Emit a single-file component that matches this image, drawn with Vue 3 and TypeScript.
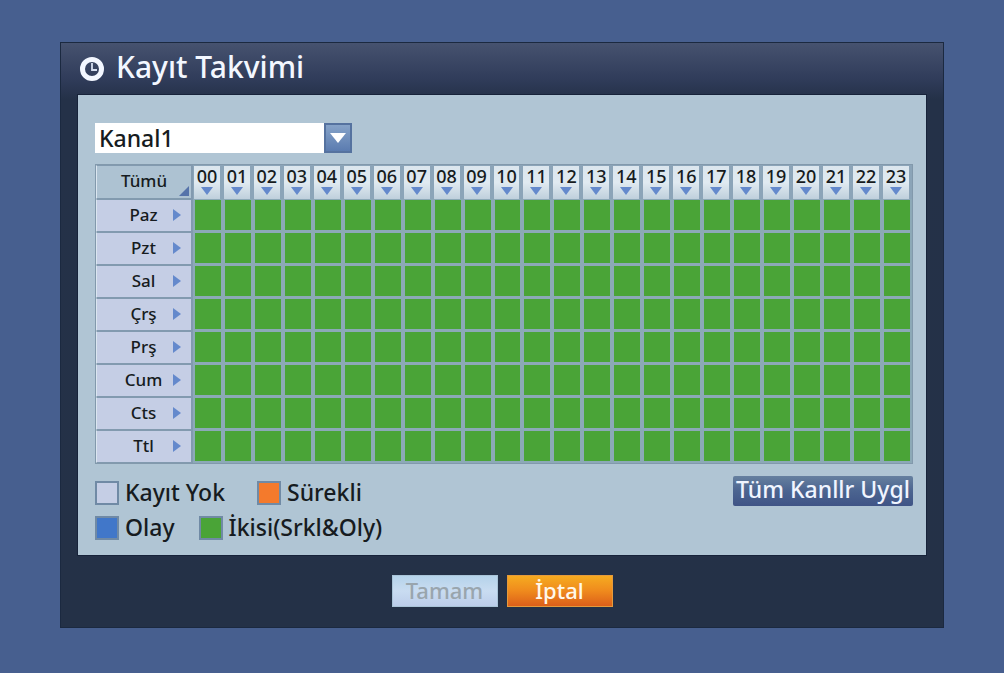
<script setup lang="ts">
import { ref } from 'vue'

type Mode = 'none' | 'continuous' | 'event' | 'both'

const days: string[] = ['Paz', 'Pzt', 'Sal', 'Çrş', 'Prş', 'Cum', 'Cts', 'Ttl']
const hours: string[] = Array.from({ length: 24 }, (_, h) => String(h).padStart(2, '0'))
const order: Mode[] = ['none', 'continuous', 'event', 'both']
const legend: { name: string; items: { mode: Mode; label: string }[] }[] = [
  {
    name: 'wide',
    items: [
      { mode: 'none', label: 'Kayıt Yok' },
      { mode: 'continuous', label: 'Sürekli' },
    ],
  },
  {
    name: 'narrow',
    items: [
      { mode: 'event', label: 'Olay' },
      { mode: 'both', label: 'İkisi(Srkl&Oly)' },
    ],
  },
]

const channel = ref('Kanal1')
const grid = ref<Mode[][]>(days.map(() => hours.map((): Mode => 'both')))

function next(mode: Mode): Mode {
  return order[(order.indexOf(mode) + 1) % order.length]
}
function cycleCell(d: number, h: number) {
  grid.value[d][h] = next(grid.value[d][h])
}
function cycleDay(d: number) {
  const mode = next(grid.value[d][0])
  grid.value[d] = hours.map(() => mode)
}
function cycleHour(h: number) {
  const mode = next(grid.value[0][h])
  grid.value.forEach((row) => (row[h] = mode))
}
function cycleAll() {
  const mode = next(grid.value[0][0])
  grid.value = days.map(() => hours.map(() => mode))
}
</script>

<template>
  <main class="screen">
    <section class="dialog" aria-labelledby="title">
      <header class="head">
        <svg class="clock" viewBox="0 0 26 26" aria-hidden="true">
          <circle cx="13" cy="13" r="9.5" fill="none" stroke="#f3f7ff" stroke-width="5" />
          <path d="M13 7V14H18" fill="none" stroke="#d5def0" stroke-width="1.8" />
        </svg>
        <h1 id="title">Kayıt Takvimi</h1>
      </header>

      <div class="panel">
        <div class="channel">
          <select v-model="channel" aria-label="Kanal">
            <option v-for="n in 4" :key="n" :value="`Kanal${n}`">Kanal{{ n }}</option>
          </select>
          <span class="drop" aria-hidden="true">
            <svg viewBox="0 0 16 10"><path d="M0 0H16L8 10Z" fill="#fff" /></svg>
          </span>
        </div>

        <table class="schedule">
          <colgroup>
            <col class="day-col" />
            <col v-for="h in hours" :key="h" />
          </colgroup>
          <thead>
            <tr>
              <th class="all">
                <button type="button" @click="cycleAll">
                  Tümü
                  <svg class="corner" viewBox="0 0 10 10" aria-hidden="true">
                    <path d="M10 0V10H0Z" fill="#5673aa" />
                  </svg>
                </button>
              </th>
              <th v-for="(h, i) in hours" :key="h" class="hour" scope="col">
                <button type="button" @click="cycleHour(i)">
                  {{ h }}
                  <svg viewBox="0 0 12 8" aria-hidden="true"><path d="M0 0H12L6 8Z" fill="#6489cc" /></svg>
                </button>
              </th>
            </tr>
          </thead>
          <tbody>
            <tr v-for="(day, d) in days" :key="day">
              <th class="day" scope="row">
                <button type="button" @click="cycleDay(d)">
                  <span>{{ day }}</span>
                  <svg viewBox="0 0 8 12" aria-hidden="true"><path d="M0 0L8 6L0 12Z" fill="#6489cc" /></svg>
                </button>
              </th>
              <td v-for="(h, i) in hours" :key="h">
                <button
                  type="button"
                  :class="['cell', grid[d][i]]"
                  :aria-label="`${day} ${h}`"
                  @click="cycleCell(d, i)"
                ></button>
              </td>
            </tr>
          </tbody>
        </table>

        <div class="below">
          <div class="legend">
            <div v-for="row in legend" :key="row.name" :class="['legend-row', row.name]">
              <span v-for="item in row.items" :key="item.mode" class="key">
                <i :class="['swatch', item.mode]"></i>{{ item.label }}
              </span>
            </div>
          </div>
          <button type="button" class="apply">Tüm Kanllr Uygl</button>
        </div>
      </div>

      <footer class="foot">
        <button type="button" class="ok" disabled>Tamam</button>
        <button type="button" class="cancel">İptal</button>
      </footer>
    </section>
  </main>
</template>

<style>
body {
  margin: 0;
  background: #475f8f;
}
</style>

<style scoped>
* {
  box-sizing: border-box;
}
.screen {
  min-height: 100vh;
  padding: 42px 60px 46px;
  background: #475f8f;
  font-family: 'Noto Sans', 'Open Sans', sans-serif;
  color: #161b20;
}
button,
select {
  font-family: inherit;
  color: inherit;
  margin: 0;
  padding: 0;
  border: 0;
  border-radius: 0;
  background: none;
}
.dialog {
  padding: 0 16px 20px;
  border: 1px solid #1b2940;
  background: linear-gradient(#46526f 0, #303c5a 36px, #243148 56px, #243147 100%);
}
.head {
  display: flex;
  align-items: center;
  gap: 11px;
  height: 51px;
  padding-left: 2px;
}
.clock {
  width: 26px;
  height: 26px;
}
h1 {
  margin: 0;
  padding-bottom: 4px;
  font-size: 30px;
  line-height: 40px;
  font-weight: 500;
  color: #f3f7ff;
}
.panel {
  padding: 28px 13px 12px 17px;
  border: 1px solid #17233a;
  background: #b0c5d4;
}
.channel {
  position: relative;
  width: 257px;
  height: 30px;
}
.channel select {
  width: 100%;
  height: 30px;
  padding: 0 32px 0 4px;
  appearance: none;
  background: #fff;
  font-size: 23px;
  font-weight: 500;
  line-height: 30px;
}
.drop {
  position: absolute;
  top: 0;
  right: 0;
  display: grid;
  place-items: center;
  width: 28px;
  height: 30px;
  border: 2px solid #55729f;
  background: linear-gradient(#86a3c8, #5b7cb0);
  pointer-events: none;
}
.drop svg {
  width: 16px;
  height: 10px;
}
.schedule {
  width: 100%;
  margin-top: 11px;
  table-layout: fixed;
  border-collapse: separate;
  border-spacing: 0;
  border: 1px solid #8299ac;
  background: #8fa9b2;
}
.day-col {
  width: 97px;
}
.schedule th,
.schedule td {
  padding: 0;
}
.schedule th button {
  position: relative;
  display: block;
  width: 100%;
  font-size: 17px;
  font-weight: 500;
}
.all button,
.day button {
  border: 1px solid #829aaf;
  border-left-color: #dbe6f0;
  border-right-width: 2px;
}
.schedule .all button {
  height: 34px;
  padding-bottom: 2px;
  background: #adc2d2;
  line-height: 28px;
}
.all .corner {
  position: absolute;
  right: 2px;
  bottom: 2px;
  width: 10px;
  height: 10px;
}
.hour {
  border: solid #8ba4b8;
  border-width: 1px 3px 0 1px;
}
.schedule .hour button {
  height: 33px;
  background: linear-gradient(#dbe6ee, #e0eaf1 50%, #bfd0dc);
  font-size: 18px;
  line-height: 21px;
}
.hour svg {
  display: block;
  width: 12px;
  height: 8px;
  margin: 0 auto 4px;
}
.schedule .day button {
  display: flex;
  align-items: center;
  height: 33px;
  padding: 0 10px 2px 0;
  background: #c5cee5;
}
.day span {
  flex: 1;
  padding-left: 17px;
  text-align: center;
}
.day svg {
  width: 8px;
  height: 12px;
}
.cell {
  display: block;
  width: 100%;
  height: 33px;
}
td .cell {
  border: solid #8ca9b7;
  border-width: 1px 2px 2px;
}
.none {
  background: #c5cee5;
}
.continuous {
  background: #f47a2c;
}
.event {
  background: #4177c9;
}
.both {
  background: #4aa437;
}
.below {
  display: flex;
  justify-content: space-between;
  align-items: flex-start;
  padding-top: 12px;
}
.legend {
  display: grid;
  gap: 4px;
  padding-top: 1px;
}
.legend-row {
  display: flex;
  font-size: 23px;
  font-weight: 500;
  line-height: 31px;
}
.wide {
  gap: 32px;
}
.narrow {
  gap: 24px;
}
.key {
  display: flex;
  align-items: center;
  gap: 6px;
}
.swatch {
  width: 24px;
  height: 24px;
  border: 2px solid #708aa5;
}
.apply {
  height: 30px;
  width: 180px;
  padding-bottom: 4px;
  border-radius: 2px;
  background: linear-gradient(#66809f, #4b6490 50%, #3f5486);
  color: #f0f5ff;
  font-size: 23px;
  font-weight: 500;
  line-height: 26px;
  white-space: nowrap;
}
.foot {
  display: flex;
  justify-content: center;
  gap: 9px;
  padding-top: 19px;
}
.foot button {
  width: 106px;
  height: 32px;
  padding-bottom: 2px;
  font-size: 22px;
  font-weight: 500;
  line-height: 28px;
}
.foot .ok {
  border: 1px solid #a9c4d8;
  background: linear-gradient(#b5d3ea, #c9dcf1 50%, #bccdea);
  color: #99a5ad;
}
.foot .cancel {
  border: 1px solid #e59a3c;
  background: linear-gradient(#f6ab20, #ef8a1d 50%, #dc5f1a);
  color: #fff8ea;
}
</style>
